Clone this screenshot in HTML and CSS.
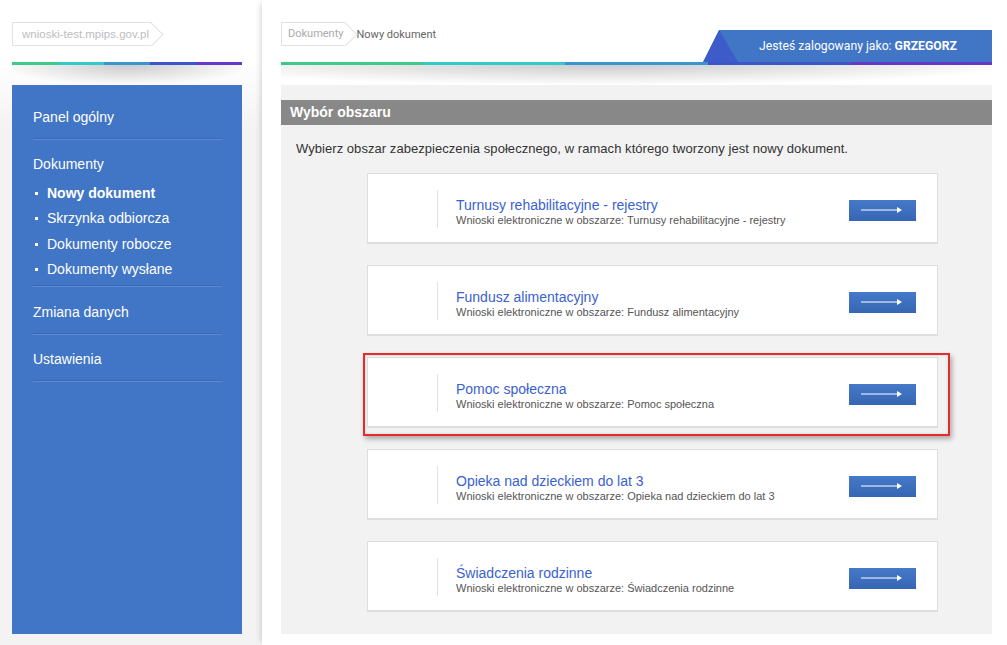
FILE: index.html
```html
<!DOCTYPE html>
<html lang="pl">
<head>
<meta charset="utf-8">
<title>Nowy dokument</title>
<link rel="stylesheet" href="styles.css">
</head>
<body>
<div class="page">
  <aside class="left">
    <div class="tag"><span class="tag-text">wnioski-test.mpips.gov.pl</span></div>
    <div class="bar"></div>
    <div class="bar-shadow"></div>
    <nav class="sidebar">
      <div class="nav-section"><a class="nav-link">Panel ogólny</a></div>
      <div class="nav-section">
        <a class="nav-link">Dokumenty</a>
        <ul class="sub">
          <li class="active">Nowy dokument</li>
          <li>Skrzynka odbiorcza</li>
          <li>Dokumenty robocze</li>
          <li>Dokumenty wysłane</li>
        </ul>
      </div>
      <div class="nav-section"><a class="nav-link">Zmiana danych</a></div>
      <div class="nav-section"><a class="nav-link">Ustawienia</a></div>
    </nav>
  </aside>
  <main class="main">
    <div class="topline">
      <div class="crumbs">
        <span class="crumb"><span class="tag-text">Dokumenty</span></span>
        <span class="crumb-current">Nowy dokument</span>
      </div>
      <div class="user">Jesteś zalogowany jako: <b>GRZEGORZ</b></div>
    </div>
    <div class="bar"></div>
    <div class="bar-shadow"></div>
    <section class="panel">
      <h2 class="panel-title">Wybór obszaru</h2>
      <p class="intro">Wybierz obszar zabezpieczenia społecznego, w ramach którego tworzony jest nowy dokument.</p>
      <div class="cards">
        <div class="card">
          <div class="card-text">
            <div class="card-title">Turnusy rehabilitacyjne - rejestry</div>
            <div class="card-sub">Wnioski elektroniczne w obszarze: Turnusy rehabilitacyjne - rejestry</div>
          </div>
          <button class="go"><svg width="42" height="8" viewBox="0 0 42 8"><line x1="0" y1="4" x2="37" y2="4" stroke="#fff" stroke-width="1.2"/><polygon points="36,1 41,4 36,7" fill="#fff"/></svg></button>
        </div>
        <div class="card">
          <div class="card-text">
            <div class="card-title">Fundusz alimentacyjny</div>
            <div class="card-sub">Wnioski elektroniczne w obszarze: Fundusz alimentacyjny</div>
          </div>
          <button class="go"><svg width="42" height="8" viewBox="0 0 42 8"><line x1="0" y1="4" x2="37" y2="4" stroke="#fff" stroke-width="1.2"/><polygon points="36,1 41,4 36,7" fill="#fff"/></svg></button>
        </div>
        <div class="card highlighted">
          <div class="card-text">
            <div class="card-title">Pomoc społeczna</div>
            <div class="card-sub">Wnioski elektroniczne w obszarze: Pomoc społeczna</div>
          </div>
          <button class="go"><svg width="42" height="8" viewBox="0 0 42 8"><line x1="0" y1="4" x2="37" y2="4" stroke="#fff" stroke-width="1.2"/><polygon points="36,1 41,4 36,7" fill="#fff"/></svg></button>
        </div>
        <div class="card">
          <div class="card-text">
            <div class="card-title">Opieka nad dzieckiem do lat 3</div>
            <div class="card-sub">Wnioski elektroniczne w obszarze: Opieka nad dzieckiem do lat 3</div>
          </div>
          <button class="go"><svg width="42" height="8" viewBox="0 0 42 8"><line x1="0" y1="4" x2="37" y2="4" stroke="#fff" stroke-width="1.2"/><polygon points="36,1 41,4 36,7" fill="#fff"/></svg></button>
        </div>
        <div class="card">
          <div class="card-text">
            <div class="card-title">Świadczenia rodzinne</div>
            <div class="card-sub">Wnioski elektroniczne w obszarze: Świadczenia rodzinne</div>
          </div>
          <button class="go"><svg width="42" height="8" viewBox="0 0 42 8"><line x1="0" y1="4" x2="37" y2="4" stroke="#fff" stroke-width="1.2"/><polygon points="36,1 41,4 36,7" fill="#fff"/></svg></button>
        </div>
      </div>
    </section>
  </main>
</div>
</body>
</html>
```

FILE: styles.css
```css
* { box-sizing: border-box; }
html, body { margin: 0; padding: 0; }
body {
  font-family: "Liberation Sans", Arial, sans-serif;
  background: #f3f3f3;
  width: 1007px;
  height: 645px;
  overflow: hidden;
}
.page {
  display: flex;
  height: 645px;
}

/* left column */
.left {
  width: 262px;
  flex: none;
  padding: 22px 20px 0 12px;
  background: linear-gradient(#ffffff 0, #ffffff 60px, #f3f3f3 130px);
}
.tag {
  position: relative;
  display: inline-block;
  height: 24px;
  line-height: 22px;
  padding: 0 3px 0 9px;
  border: 1px solid #e2e2e2;
  border-right: none;
  background: #fff;
  color: #bdbdbd;
  font-size: 11.5px;
}
.tag-text {
  position: relative;
  z-index: 1;
}
.tag::after,
.crumb::after {
  content: "";
  position: absolute;
  right: -8px;
  top: 3px;
  width: 16px;
  height: 16px;
  background: #fff;
  border-top: 1px solid #e2e2e2;
  border-right: 1px solid #e2e2e2;
  transform: rotate(45deg);
}
.bar {
  height: 3px;
  margin-top: 16px;
  background: linear-gradient(to right,
    #3cc98a 0, #3cc98a 20%,
    #35c8c8 20%, #35c8c8 40%,
    #3a94cd 40%, #3a94cd 60%,
    #3c55c8 60%, #3c55c8 80%,
    #6438c8 80%, #6438c8 100%);
}
.bar-shadow {
  height: 20px;
  background: radial-gradient(ellipse 55% 100% at 50% 0, rgba(0,0,0,0.2), rgba(0,0,0,0) 100%);
}
.sidebar {
  height: 549px;
  background: #4175c6;
  padding: 6px 20px 0 21px;
}
.nav-section {
  padding: 15.5px 0 11px;
  border-bottom: 1px solid #3a69b4;
  box-shadow: 0 1px 0 #5f8ad0;
}
.nav-link {
  display: block;
  line-height: 20px;
  font-size: 14px;
  color: #fff;
}
.sub {
  list-style: none;
  margin: 7px 0 -8px;
  padding: 0;
}
.sub li {
  position: relative;
  line-height: 25.3px;
  font-size: 14px;
  color: #fff;
  padding-left: 14px;
}
.sub li::before {
  content: "";
  position: absolute;
  left: 2px;
  top: 11px;
  width: 3px;
  height: 3px;
  background: #fff;
}
.sub li.active { font-weight: bold; }

/* main column */
.main {
  flex: 1;
  background: #fff;
  padding: 0 15px 0 19px;
  box-shadow: -4px 0 6px -3px rgba(0,0,0,0.18);
}
.topline {
  display: flex;
  align-items: flex-start;
  height: 62px;
}
.crumbs {
  display: flex;
  align-items: center;
  margin-top: 22px;
  font-family: Roboto, "Liberation Sans", sans-serif;
  font-size: 11px;
}
.crumb {
  position: relative;
  height: 24px;
  line-height: 22px;
  padding: 0 2px 0 6px;
  border: 1px solid #e2e2e2;
  border-right: none;
  color: #aaa;
  background: #fff;
}
.crumb-current {
  margin-left: 11px;
  color: #666;
}
.user {
  position: relative;
  margin-left: auto;
  margin-top: 30px;
  width: 289px;
  height: 32px;
  line-height: 33px;
  padding-left: 56px;
  background: #4175c6;
  clip-path: polygon(16px 0, 100% 0, 100% 100%, 0 100%);
  color: #fff;
  font-family: Roboto, "Liberation Sans", sans-serif;
  font-size: 12.2px;
}
.user::before {
  content: "";
  position: absolute;
  left: 0;
  top: 0;
  width: 36px;
  height: 32px;
  background: #3d5bc9;
  clip-path: polygon(0 100%, 16px 0, 35px 100%);
}
.user b { font-weight: bold; }
.main .bar-shadow {
  background: radial-gradient(ellipse 60% 100% at 45% 0, rgba(0,0,0,0.2), rgba(0,0,0,0) 100%);
}
.main .bar { margin-top: 0; }
.panel {
  height: 549px;
  background: #f2f2f2;
  padding-top: 15px;
}
.panel-title {
  margin: 0;
  height: 25px;
  line-height: 25px;
  padding-left: 9px;
  background: #888;
  color: #fff;
  font-size: 14px;
  font-weight: bold;
}
.intro {
  margin: 16px 0 0 15px;
  line-height: 16px;
  font-size: 13px;
  letter-spacing: 0.05px;
  color: #333;
}
.cards {
  display: flex;
  flex-direction: column;
  gap: 21px;
  margin: 16px 0 0 86px;
  width: 571px;
}
.card {
  position: relative;
  display: flex;
  align-items: center;
  height: 71px;
  background: #fff;
  border: 1px solid #dedede;
  border-bottom-width: 2px;
  padding: 0 21px 0 69px;
}
.card-text {
  flex: 1;
  height: 38px;
  margin-top: 1px;
  border-left: 1px solid #e2e2e2;
  padding: 7px 0 0 18px;
}
.card-title {
  font-size: 14px;
  line-height: 16px;
  color: #3a62cf;
}
.card-sub {
  font-size: 11px;
  line-height: 14px;
  color: #555;
}
.go {
  width: 67px;
  height: 21px;
  margin-top: 4px;
  padding: 0;
  border: none;
  background: linear-gradient(#4579c9, #3566b3);
  display: flex;
  align-items: center;
  justify-content: center;
}
.go svg { display: block; margin-left: -2px; }
.highlighted::after {
  content: "";
  position: absolute;
  left: -5px;
  top: -5px;
  right: -13px;
  bottom: -10px;
  border: 2px solid #e52b2b;
  box-shadow: 2px 3px 5px rgba(0,0,0,0.3), inset 0 0 3px rgba(0,0,0,0.15);
  pointer-events: none;
}
```
